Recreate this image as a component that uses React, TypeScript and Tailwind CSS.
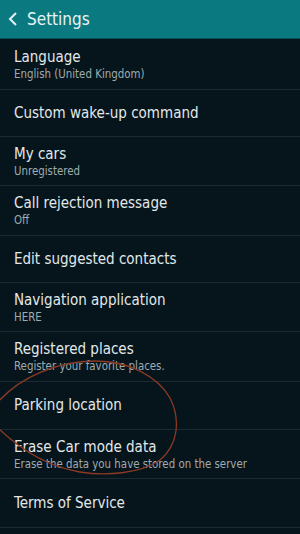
import React from "react";

const rows: { title: string; sub?: string; h: number }[] = [
  { title: "Language", sub: "English (United Kingdom)", h: 50 },
  { title: "Custom wake-up command", h: 46 },
  { title: "My cars", sub: "Unregistered", h: 48 },
  { title: "Call rejection message", sub: "Off", h: 49 },
  { title: "Edit suggested contacts", h: 46 },
  { title: "Navigation application", sub: "HERE", h: 48 },
  { title: "Registered places", sub: "Register your favorite places.", h: 49 },
  { title: "Parking location", h: 47 },
  { title: "Erase Car mode data", sub: "Erase the data you have stored on the server", h: 48 },
  { title: "Terms of Service", h: 48 },
];

export default function App() {
  return (
    <div
      className="relative w-[300px] h-[534px] overflow-hidden bg-[#06151c]"
      style={{ fontFamily: '"DejaVu Sans Condensed", "DejaVu Sans", sans-serif' }}
    >
      <div className="h-[38px] bg-[#0b7a80] flex items-center pl-[8px] gap-[9px]">
        <svg width="10" height="14" viewBox="0 0 10 14">
          <path d="M8 1 L2 7 L8 13" fill="none" stroke="#e6f2f2" strokeWidth="2" />
        </svg>
        <span className="text-[17px] text-[#e8f3f3] leading-none">Settings</span>
      </div>
      <div className="h-px bg-[#06545a]" />
      {rows.map((r) => (
        <div key={r.title}>
          <div className="flex flex-col justify-center pl-[14px]" style={{ height: r.h }}>
            <div className="text-[15px] leading-[19px] text-[#e2e8ea]">{r.title}</div>
            {r.sub && <div className="text-[11.4px] leading-[14px] text-[#9eabaf]">{r.sub}</div>}
          </div>
          <div className="h-px bg-[#1c2b31]" />
        </div>
      ))}
      <svg className="absolute left-0 top-0 pointer-events-none" width="300" height="534">
        <path
          d="M -2 402 C 20 377, 58 361, 95 361 C 130 361, 158 377, 170 398 C 181 420, 178 445, 160 460 C 140 474, 105 476, 80 472 C 50 467, 20 450, -5 425"
          fill="none"
          stroke="#8c3a25"
          strokeWidth="1.3"
        />
      </svg>
    </div>
  );
}
